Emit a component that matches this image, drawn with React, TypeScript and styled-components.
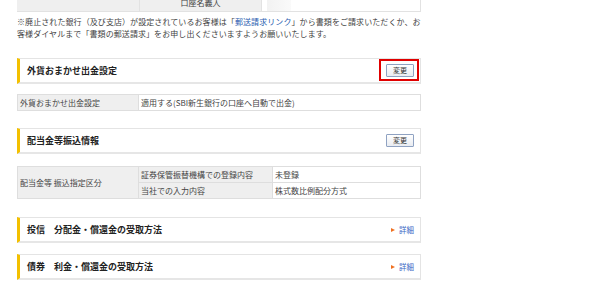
import { FC } from "react";
import styled, { createGlobalStyle } from "styled-components";

const GlobalStyle = createGlobalStyle`
  html, body {
    margin: 0;
    padding: 0;
    background: #ffffff;
  }
  body {
    font-family: "Noto Sans CJK JP", "Noto Sans", sans-serif;
    color: #333333;
    overflow: hidden;
  }
`;

const Page = styled("div")`
  width: 404px;
  padding-left: 17px;
  display: flex;
  flex-direction: column;
`;

const TopRow = styled("div")`
  margin-top: -7px;
  height: 18px;
  display: grid;
  grid-template-columns: 123px 122px 1fr;
  border-bottom: 1px solid #e2e2e2;
  font-size: 8px;
`;

const TopLabel = styled("div")<{ $center?: boolean }>`
  background: #efefef;
  border-right: 1px solid #e2e2e2;
  display: flex;
  align-items: center;
  justify-content: ${({ $center }) => ($center ? "center" : "flex-start")};
  color: #444444;
`;

const TopValue = styled("div")`
  background: #ffffff;
  border-right: 1px solid #e2e2e2;
  display: flex;
  align-items: center;
  padding-left: 5px;
`;

const InputStub = styled("div")`
  width: 24px;
  height: 100%;
  background: linear-gradient(90deg, #f2f2f2, #fafafa);
`;

const Notice = styled("p")`
  margin: 4px 0 0;
  font-size: 8px;
  line-height: 12px;
  color: #444444;
  letter-spacing: 0.08px;
`;

const Link = styled("a")`
  color: #2a5db0;
  text-decoration: none;
`;

const SectionHeader = styled("div")<{ $gap: number }>`
  margin-top: ${({ $gap }) => $gap}px;
  height: 23px;
  display: flex;
  align-items: center;
  justify-content: space-between;
  padding: 0 6px 0 7px;
  border-top: 1px solid #e4e4e4;
  border-right: 1px solid #e4e4e4;
  border-bottom: 2px solid #e6e6e6;
  border-left: 3px solid #f3c000;
  background: #ffffff;
`;

const Title = styled("h3")`
  margin: 0;
  font-size: 9px;
  font-weight: 700;
  color: #222222;
  white-space: pre;
`;

const ButtonWrap = styled("span")`
  position: relative;
  display: inline-flex;
`;

const Highlight = styled("span")`
  position: absolute;
  top: -5px;
  right: -5px;
  bottom: -4px;
  left: -7px;
  border: 2px solid #e00000;
  pointer-events: none;
`;

const ChangeButton = styled("button")`
  width: 28px;
  height: 13px;
  padding: 0;
  border: 1px solid #8fa2c2;
  border-radius: 1px;
  background: linear-gradient(#ffffff, #e9ecf1);
  font-family: inherit;
  font-size: 7px;
  line-height: 11px;
  color: #333333;
`;

const Detail = styled("a")`
  display: inline-flex;
  align-items: center;
  gap: 4px;
  font-size: 7.5px;
  color: #3a66c4;
  text-decoration: none;
`;

const Arrow = styled("span")`
  width: 0;
  height: 0;
  border-top: 2.5px solid transparent;
  border-bottom: 2.5px solid transparent;
  border-left: 4px solid #f07020;
`;

const InfoGrid = styled("div")<{ $gap: number; $cols: string }>`
  margin-top: ${({ $gap }) => $gap}px;
  display: grid;
  grid-template-columns: ${({ $cols }) => $cols};
  grid-auto-rows: 15px;
  gap: 1px;
  padding: 1px;
  background: #dedede;
  font-size: 8px;
`;

const Cell = styled("div")<{ $label?: boolean; $rows?: number }>`
  background: ${({ $label }) => ($label ? "#efefef" : "#ffffff")};
  grid-row: span ${({ $rows }) => $rows ?? 1};
  display: flex;
  align-items: center;
  padding-left: 2px;
  color: #444444;
  white-space: nowrap;
  overflow: hidden;
`;

const Header: FC<{ title: string; gap: number; action: "change" | "marked" | "detail" }> = ({
  title,
  gap,
  action,
}) => (
  <SectionHeader $gap={gap}>
    <Title>{title}</Title>
    {action === "detail" ? (
      <Detail href="#">
        <Arrow />
        詳細
      </Detail>
    ) : (
      <ButtonWrap>
        <ChangeButton>変更</ChangeButton>
        {action === "marked" && <Highlight />}
      </ButtonWrap>
    )}
  </SectionHeader>
);

export default function App() {
  return (
    <>
      <GlobalStyle />
      <Page>
        <TopRow>
          <TopLabel />
          <TopLabel $center>口座名義人</TopLabel>
          <TopValue>
            <InputStub />
          </TopValue>
        </TopRow>
        <Notice>
          ※廃止された銀行（及び支店）が設定されているお客様は「<Link href="#">郵送請求リンク</Link>
          」から書類をご請求いただくか、お客様ダイヤルまで「書類の郵送請求」をお申し出くださいますようお願いいたします。
        </Notice>

        <Header title="外貨おまかせ出金設定" gap={18} action="marked" />
        <InfoGrid $gap={10} $cols="120px 1fr">
          <Cell $label>外貨おまかせ出金設定</Cell>
          <Cell>適用する(SBI新生銀行の口座へ自動で出金)</Cell>
        </InfoGrid>

        <Header title="配当金等振込情報" gap={17} action="change" />
        <InfoGrid $gap={12} $cols="120px 133px 1fr">
          <Cell $label $rows={2}>
            配当金等 振込指定区分
          </Cell>
          <Cell $label>証券保管振替機構での登録内容</Cell>
          <Cell>未登録</Cell>
          <Cell $label>当社での入力内容</Cell>
          <Cell>株式数比例配分方式</Cell>
        </InfoGrid>

        <Header title="投信　分配金・償還金の受取方法" gap={18} action="detail" />
        <Header title="債券　利金・償還金の受取方法" gap={11} action="detail" />
      </Page>
    </>
  );
}
